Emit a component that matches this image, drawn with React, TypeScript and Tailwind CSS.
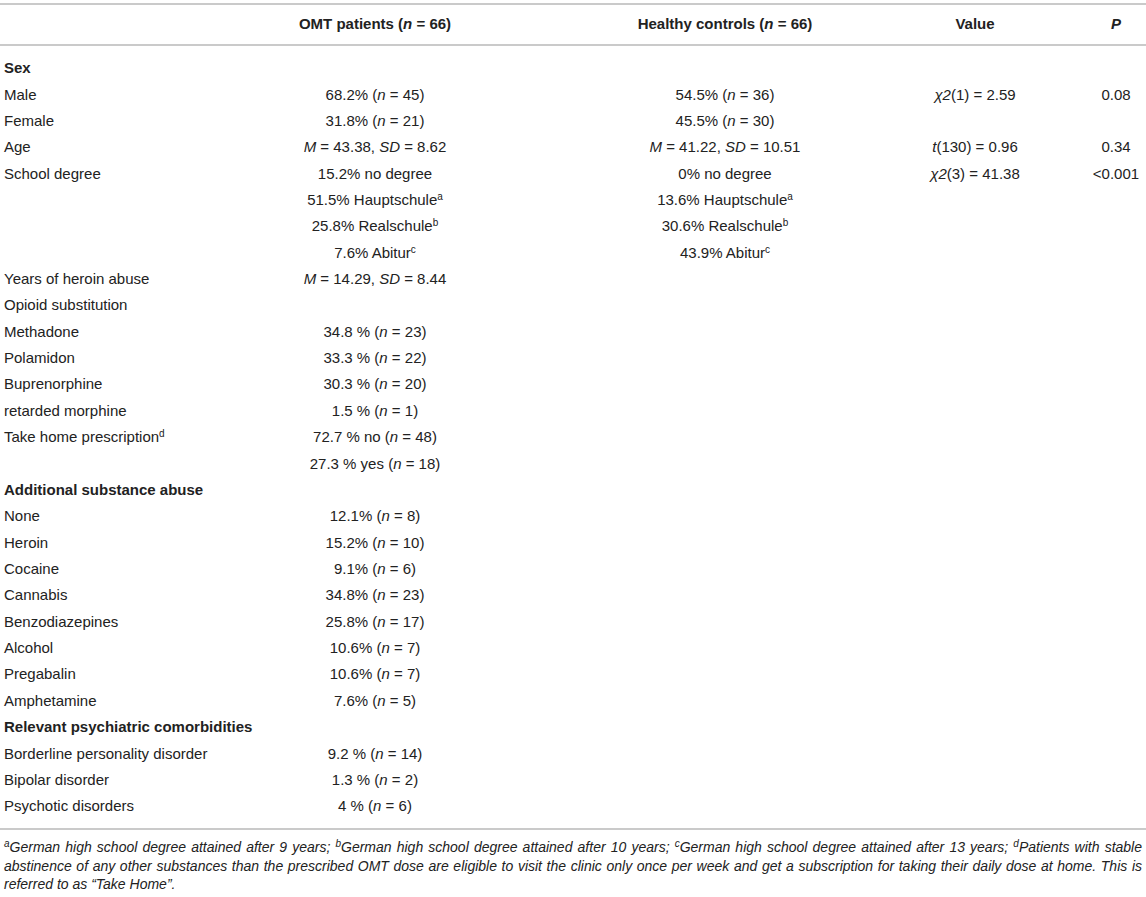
import React from 'react';

type Row = {
  label?: React.ReactNode;
  omt?: React.ReactNode;
  hc?: React.ReactNode;
  value?: React.ReactNode;
  p?: React.ReactNode;
  section?: boolean;
};

const I = ({ children }: { children: React.ReactNode }) => <i>{children}</i>;
const Sup = ({ children }: { children: React.ReactNode }) => <sup className="text-[10px]">{children}</sup>;
const N = (pct: string, n: string) => (
  <>
    {pct} (<I>n</I> = {n})
  </>
);

const rows: Row[] = [
  { label: 'Sex', section: true },
  { label: 'Male', omt: N('68.2%', '45'), hc: N('54.5%', '36'), value: <><I>χ2</I>(1) = 2.59</>, p: '0.08' },
  { label: 'Female', omt: N('31.8%', '21'), hc: N('45.5%', '30') },
  {
    label: 'Age',
    omt: <><I>M</I> = 43.38, <I>SD</I> = 8.62</>,
    hc: <><I>M</I> = 41.22, <I>SD</I> = 10.51</>,
    value: <><I>t</I>(130) = 0.96</>,
    p: '0.34',
  },
  { label: 'School degree', omt: '15.2% no degree', hc: '0% no degree', value: <><I>χ2</I>(3) = 41.38</>, p: '<0.001' },
  { omt: <>51.5% Hauptschule<Sup>a</Sup></>, hc: <>13.6% Hauptschule<Sup>a</Sup></> },
  { omt: <>25.8% Realschule<Sup>b</Sup></>, hc: <>30.6% Realschule<Sup>b</Sup></> },
  { omt: <>7.6% Abitur<Sup>c</Sup></>, hc: <>43.9% Abitur<Sup>c</Sup></> },
  { label: 'Years of heroin abuse', omt: <><I>M</I> = 14.29, <I>SD</I> = 8.44</> },
  { label: 'Opioid substitution' },
  { label: 'Methadone', omt: N('34.8 %', '23') },
  { label: 'Polamidon', omt: N('33.3 %', '22') },
  { label: 'Buprenorphine', omt: N('30.3 %', '20') },
  { label: 'retarded morphine', omt: N('1.5 %', '1') },
  { label: <>Take home prescription<Sup>d</Sup></>, omt: <>72.7 % no (<I>n</I> = 48)</> },
  { omt: <>27.3 % yes (<I>n</I> = 18)</> },
  { label: 'Additional substance abuse', section: true },
  { label: 'None', omt: N('12.1%', '8') },
  { label: 'Heroin', omt: N('15.2%', '10') },
  { label: 'Cocaine', omt: N('9.1%', '6') },
  { label: 'Cannabis', omt: N('34.8%', '23') },
  { label: 'Benzodiazepines', omt: N('25.8%', '17') },
  { label: 'Alcohol', omt: N('10.6%', '7') },
  { label: 'Pregabalin', omt: N('10.6%', '7') },
  { label: 'Amphetamine', omt: N('7.6%', '5') },
  { label: 'Relevant psychiatric comorbidities', section: true },
  { label: 'Borderline personality disorder', omt: N('9.2 %', '14') },
  { label: 'Bipolar disorder', omt: N('1.3 %', '2') },
  { label: 'Psychotic disorders', omt: N('4 %', '6') },
];

const grid = 'grid grid-cols-[250px_310px_330px_170px_86px] items-center';

export default function App() {
  return (
    <div
      className="w-[1146px] bg-white text-[#222] text-[15px] pt-[3px]"
      style={{ fontFamily: '"Liberation Sans", Arial, sans-serif' }}
    >
      <div className="h-[2px] bg-[#cacaca]" />
      <div className={`${grid} h-[39px] font-bold`}>
        <div />
        <div className="text-center pr-[60px]">
          OMT patients (<I>n</I> = 66)
        </div>
        <div className="text-center">
          Healthy controls (<I>n</I> = 66)
        </div>
        <div className="text-center">Value</div>
        <div className="text-center pl-[26px]">
          <I>P</I>
        </div>
      </div>
      <div className="h-[2px] bg-[#cacaca]" />

      <div className="pt-[9px]">
        {rows.map((r, i) => (
          <div key={i} className={`${grid} h-[26.36px] leading-[18px]`}>
            <div className={`pl-1 whitespace-nowrap ${r.section ? 'font-bold' : ''}`}>{r.label}</div>
            <div className="text-center pr-[60px] whitespace-nowrap">{r.omt}</div>
            <div className="text-center whitespace-nowrap">{r.hc}</div>
            <div className="text-center whitespace-nowrap">{r.value}</div>
            <div className="text-center pl-[26px] whitespace-nowrap">{r.p}</div>
          </div>
        ))}
      </div>

      <div className="mt-[9px] h-[2px] bg-[#cacaca]" />
      <p className="pt-[8px] px-1 text-[14px] leading-[18.5px] italic text-justify">
        <Sup>a</Sup>German high school degree attained after 9 years; <Sup>b</Sup>German high school degree
        attained after 10 years; <Sup>c</Sup>German high school degree attained after 13 years;{' '}
        <Sup>d</Sup>Patients with stable abstinence of any other substances than the prescribed OMT dose are
        eligible to visit the clinic only once per week and get a subscription for taking their daily dose at
        home. This is referred to as “Take Home”.
      </p>
    </div>
  );
}
